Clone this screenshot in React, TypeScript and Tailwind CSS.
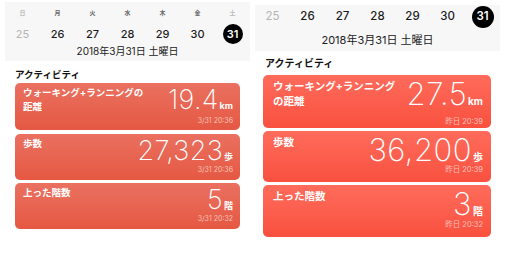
import React from "react";

const JP = "font-['Inter','Noto_Sans_CJK_JP',sans-serif]";

type CardProps = {
  title: React.ReactNode;
  value: string;
  unit: string;
  ts: string;
  big: boolean;
  h: string;
  tsMt?: string;
};

function Card({ title, value, unit, ts, big, h, tsMt }: CardProps) {
  return (
    <div
      className={`${h} flex justify-between rounded-[5px] ${
        big
          ? "bg-gradient-to-b from-[#ff6b5b] to-[#f9503f] pl-[10px] pr-[8px]"
          : "bg-gradient-to-b from-[#ea7060] to-[#e55842] pl-[8px] pr-[7px]"
      }`}
    >
      <div
        className={`text-white font-bold ${
          big ? "pt-[4px] text-[10.5px] leading-[15px]" : "pt-[3px] text-[9.5px] leading-[14px]"
        }`}
      >
        {title}
      </div>
      <div className="flex flex-col items-end pt-[3px]">
        <div
          className={`flex items-baseline text-white ${
            big ? "h-[31px] leading-[31px]" : "h-[28px] leading-[28px]"
          }`}
        >
          <span
            className={`font-['Inter',sans-serif] font-extralight ${
              big ? "text-[31px] tracking-[0.5px]" : "text-[27px] tracking-[0.3px]"
            }`}
          >
            {value}
          </span>
          <span className={`ml-[1px] font-bold ${big ? "text-[10px]" : "text-[9px]"}`}>{unit}</span>
        </div>
        <div
          className={`${tsMt ?? ""} leading-[10px] ${
            big ? "text-[7.5px] text-[#ffc0b6]" : "text-[7px] text-[#f8c2b7]"
          }`}
        >
          {ts}
        </div>
      </div>
    </div>
  );
}

const days = ["25", "26", "27", "28", "29", "30"];

export default function App() {
  return (
    <div className={`w-[505px] h-[255px] bg-white flex ${JP} text-[#111] overflow-hidden`}>
      {/* Left panel */}
      <div className="w-[250px] pl-[5px] pt-[2px] shrink-0">
        <div className="bg-[#f7f7f7] h-[59px] w-[245px] overflow-hidden">
          <div className="grid grid-cols-7 h-[22px] leading-[22px] text-[6px] font-bold text-center text-[#666]">
            <span className="text-[#bbb]">日</span>
            <span>月</span>
            <span>火</span>
            <span>水</span>
            <span>木</span>
            <span>金</span>
            <span className="text-[#bbb]">土</span>
          </div>
          <div className="grid grid-cols-7 h-[16px] text-[11px] font-medium font-['Inter',sans-serif]">
            {days.map((d, i) => (
              <div key={d} className={`flex items-center justify-center ${i === 0 ? "text-[#b5b5b5] font-normal" : "text-[#1c1c1c]"}`}>
                {d}
              </div>
            ))}
            <div className="flex items-center justify-center">
              <span className="w-[20px] h-[20px] rounded-full bg-black text-white font-semibold flex items-center justify-center shrink-0">31</span>
            </div>
          </div>
          <div className="h-[21px] leading-[22px] text-center text-[10px] text-[#222]">2018年3月31日 土曜日</div>
        </div>
        <div className="pl-[10px] pt-[7px] h-[21px] leading-[14px] text-[9.5px] font-bold text-[#111]">アクティビティ</div>
        <div className="ml-[10px] w-[225px] mt-[1px] flex flex-col gap-[3.5px]">
          <Card
            big={false}
            h="h-[47px]"
            tsMt="mt-[2px]"
            title={
              <>
                ウォーキング+ランニングの
                <br />
                距離
              </>
            }
            value="19.4"
            unit="km"
            ts="3/31 20:36"
          />
          <Card big={false} h="h-[46px]" title="歩数" value="27,323" unit="歩" ts="3/31 20:36" />
          <Card big={false} h="h-[46px]" title="上った階数" value="5" unit="階" ts="3/31 20:32" />
        </div>
      </div>

      {/* Right panel */}
      <div className="w-[250px] pl-[5px] pt-[5px] shrink-0">
        <div className="bg-[#f7f7f8] h-[46px] w-[245px] overflow-hidden">
          <div className="grid grid-cols-7 h-[24px] text-[11.5px] font-medium font-['Inter',sans-serif]">
            {days.map((d, i) => (
              <div key={d} className={`flex items-center justify-center ${i === 0 ? "text-[#b5b5b5] font-normal" : "text-[#1c1c1c]"}`}>
                {d}
              </div>
            ))}
            <div className="flex items-center justify-center">
              <span className="w-[22px] h-[22px] rounded-full bg-black text-white font-semibold flex items-center justify-center shrink-0">31</span>
            </div>
          </div>
          <div className="h-[22px] leading-[22px] text-center text-[11px] text-[#222]">2018年3月31日 土曜日</div>
        </div>
        <div className="pl-[10px] pt-[5px] h-[19px] leading-[14px] text-[10px] font-bold text-[#111]">アクティビティ</div>
        <div className="ml-[8px] w-[228px] mt-[5px] flex flex-col gap-[3px]">
          <Card
            big
            h="h-[53px]"
            tsMt="mt-[8px]"
            title={
              <>
                ウォーキング+ランニング
                <br />
                の距離
              </>
            }
            value="27.5"
            unit="km"
            ts="昨日 20:39"
          />
          <Card big h="h-[51px]" title="歩数" value="36,200" unit="歩" ts="昨日 20:39" />
          <Card big h="h-[52px]" tsMt="mt-[1px]" title="上った階数" value="3" unit="階" ts="昨日 20:32" />
        </div>
      </div>
    </div>
  );
}
